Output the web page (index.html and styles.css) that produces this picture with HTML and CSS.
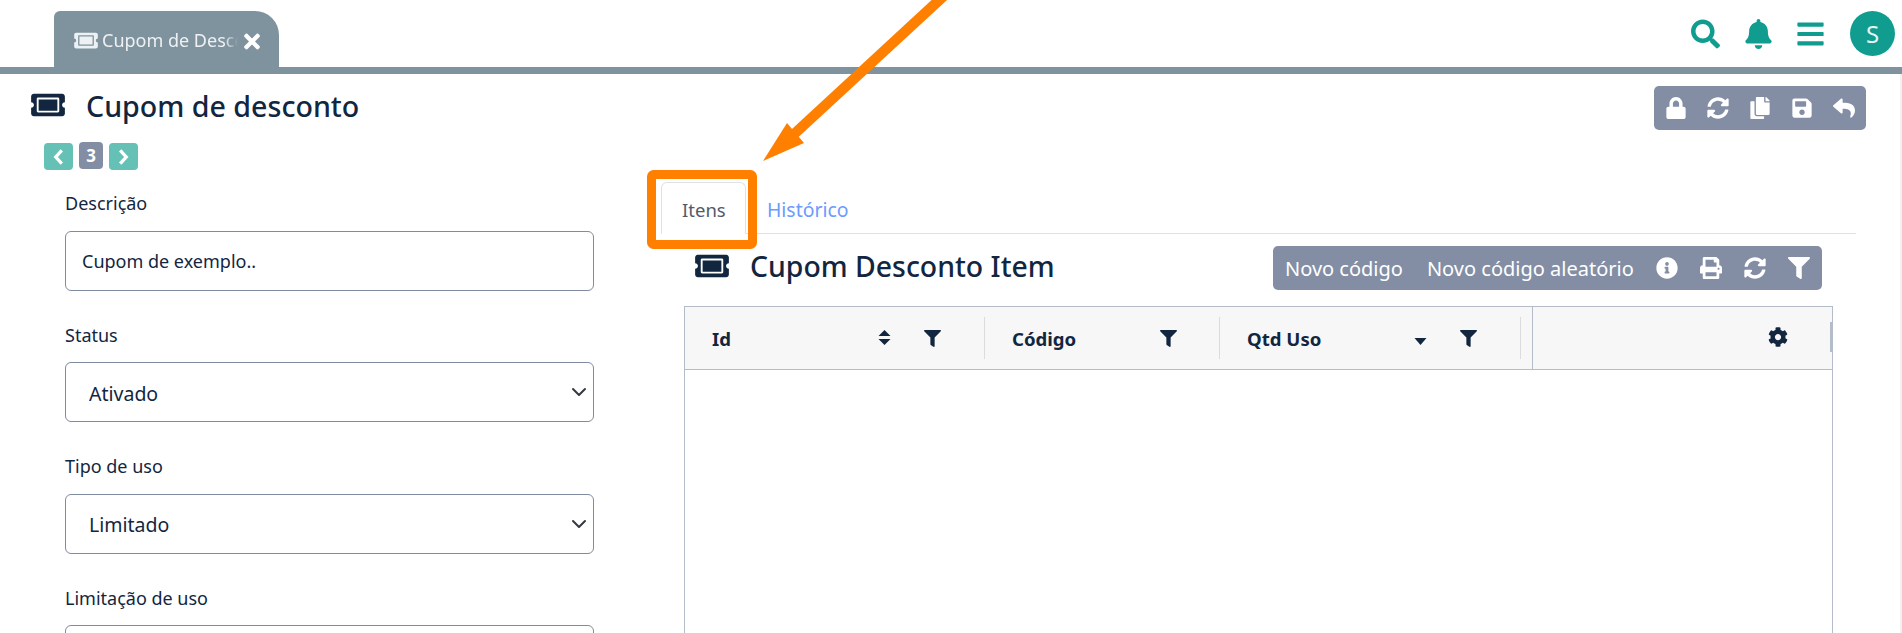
FILE: index.html
```html
<!DOCTYPE html>
<html lang="pt-BR">
<head>
    <meta charset="UTF-8">
    <title>Cupom de desconto</title>
    <link rel="stylesheet" href="styles.css">
</head>
<body>
<svg class="icon-defs" aria-hidden="true">
    <symbol id="i-ticket" viewBox="0 0 576 512"><path d="M128 160h320v192H128V160zm400 96c0 26.51 21.49 48 48 48v96c0 26.51-21.49 48-48 48H48c-26.51 0-48-21.49-48-48v-96c26.51 0 48-21.49 48-48s-21.49-48-48-48v-96c0-26.51 21.49-48 48-48h480c26.51 0 48 21.49 48 48v96c-26.51 0-48 21.49-48 48zm-48-104c0-13.255-10.745-24-24-24H120c-13.255 0-24 10.745-24 24v208c0 13.255 10.745 24 24 24h336c13.255 0 24-10.745 24-24V152z"/></symbol>
    <symbol id="i-sync" viewBox="0 0 512 512"><path d="M370.72 133.28C339.458 104.008 298.888 87.962 255.848 88c-77.458.068-144.328 53.178-162.791 126.85-1.344 5.363-6.122 9.15-11.651 9.15H24.103c-7.498 0-13.194-6.807-11.807-14.176C33.933 94.924 134.813 8 256 8c66.448 0 126.791 26.136 171.315 68.685L463.03 40.97C478.149 25.851 504 36.559 504 57.941V192c0 13.255-10.745 24-24 24H345.941c-21.382 0-32.09-25.851-16.971-40.971l41.75-41.749zM32 296h134.059c21.382 0 32.09 25.851 16.971 40.971l-41.75 41.75c31.262 29.273 71.835 45.319 114.876 45.28 77.418-.07 144.315-53.144 162.787-126.849 1.344-5.363 6.122-9.15 11.651-9.15h57.304c7.498 0 13.194 6.807 11.807 14.176C478.067 417.076 377.187 504 256 504c-66.448 0-126.791-26.136-171.315-68.685L48.97 471.03C33.851 486.149 8 475.441 8 454.059V320c0-13.255 10.745-24 24-24z"/></symbol>
    <symbol id="i-filter" viewBox="0 0 512 512"><path d="M487.976 0H24.028C2.71 0-8.047 25.866 7.058 40.971L192 225.941V432c0 7.831 3.821 15.17 10.237 19.662l80 55.98C298.02 518.69 320 507.493 320 487.98V225.941l184.947-184.97C520.021 25.896 509.338 0 487.976 0z"/></symbol>
</svg>

<header class="topbar">
    <div class="open-tab">
        <svg class="open-tab-icon"><use href="#i-ticket"/></svg>
        <span class="open-tab-text">Cupom de Desconto</span>
        <svg class="open-tab-close" viewBox="0 0 352 512"><path d="M242.72 256l100.07-100.07c12.28-12.28 12.28-32.19 0-44.48l-22.24-22.24c-12.28-12.28-32.19-12.28-44.48 0L176 189.28 75.93 89.21c-12.28-12.28-32.19-12.28-44.48 0L9.21 111.45c-12.28 12.28-12.28 32.19 0 44.48L109.28 256 9.21 356.07c-12.28 12.28-12.28 32.19 0 44.48l22.24 22.24c12.28 12.28 32.2 12.28 44.48 0L176 322.72l100.07 100.07c12.28 12.28 32.2 12.28 44.48 0l22.24-22.24c12.28-12.28 12.28-32.19 0-44.48L242.72 256z"/></svg>
    </div>
    <div class="top-actions">
        <svg class="top-icon" viewBox="0 0 512 512"><path d="M505 442.7L405.3 343c-4.5-4.5-10.6-7-17-7H372c27.6-35.3 44-79.7 44-128C416 93.1 322.9 0 208 0S0 93.1 0 208s93.1 208 208 208c48.3 0 92.7-16.4 128-44v16.3c0 6.4 2.5 12.5 7 17l99.7 99.7c9.4 9.4 24.6 9.4 33.9 0l28.3-28.3c9.4-9.4 9.4-24.6.1-34zM208 336c-70.7 0-128-57.2-128-128 0-70.7 57.2-128 128-128 70.7 0 128 57.2 128 128 0 70.7-57.2 128-128 128z"/></svg>
        <svg class="top-icon" viewBox="0 0 448 512"><path d="M224 512c35.32 0 63.97-28.65 63.97-64H160.03c0 35.35 28.65 64 63.97 64zm215.39-149.71c-19.32-20.76-55.47-51.99-55.47-154.29 0-77.7-54.48-139.9-127.94-155.16V32c0-17.67-14.32-32-31.98-32s-31.98 14.33-31.98 32v20.84C118.56 68.1 64.08 130.3 64.08 208c0 102.3-36.15 133.53-55.47 154.29-6 6.45-8.66 14.16-8.61 21.71.11 16.4 12.98 32 32.1 32h383.8c19.12 0 32-15.6 32.1-32 .05-7.55-2.61-15.27-8.61-21.71z"/></svg>
        <svg class="top-icon" viewBox="0 0 448 512"><path d="M16 132h416c8.837 0 16-7.163 16-16V76c0-8.837-7.163-16-16-16H16C7.163 60 0 67.163 0 76v40c0 8.837 7.163 16 16 16zm0 160h416c8.837 0 16-7.163 16-16v-40c0-8.837-7.163-16-16-16H16c-8.837 0-16 7.163-16 16v40c0 8.837 7.163 16 16 16zm0 160h416c8.837 0 16-7.163 16-16v-40c0-8.837-7.163-16-16-16H16c-8.837 0-16 7.163-16 16v40c0 8.837 7.163 16 16 16z"/></svg>
        <div class="avatar">S</div>
    </div>
</header>

<main class="page">
    <div class="page-head">
        <h1 class="page-title">
            <svg class="title-icon"><use href="#i-ticket"/></svg>
            Cupom de desconto
        </h1>
        <div class="toolbar toolbar-main">
            <svg class="tool-icon" viewBox="0 0 448 512"><path d="M400 224h-24v-72C376 68.2 307.8 0 224 0S72 68.2 72 152v72H48c-26.5 0-48 21.5-48 48v192c0 26.5 21.5 48 48 48h352c26.5 0 48-21.5 48-48V272c0-26.5-21.5-48-48-48zm-104 0H152v-72c0-39.7 32.3-72 72-72s72 32.3 72 72v72z"/></svg>
            <svg class="tool-icon"><use href="#i-sync"/></svg>
            <svg class="tool-icon" viewBox="0 0 448 512"><path d="M320 448v40c0 13.255-10.745 24-24 24H24c-13.255 0-24-10.745-24-24V120c0-13.255 10.745-24 24-24h72v296c0 30.879 25.121 56 56 56h168zm0-344V0H152c-13.255 0-24 10.745-24 24v368c0 13.255 10.745 24 24 24h272c13.255 0 24-10.745 24-24V128H344c-13.2 0-24-10.8-24-24zm120.971-31.029L375.029 7.029A24 24 0 0 0 358.059 0H352v96h96v-6.059a24 24 0 0 0-7.029-16.97z"/></svg>
            <svg class="tool-icon" viewBox="0 0 448 512"><path d="M433.941 129.941l-83.882-83.882A48 48 0 0 0 316.118 32H48C21.49 32 0 53.49 0 80v352c0 26.51 21.49 48 48 48h352c26.51 0 48-21.49 48-48V163.882a48 48 0 0 0-14.059-33.941zM224 416c-35.346 0-64-28.654-64-64 0-35.346 28.654-64 64-64s64 28.654 64 64c0 35.346-28.654 64-64 64zm96-304.52V212c0 6.627-5.373 12-12 12H76c-6.627 0-12-5.373-12-12V108c0-6.627 5.373-12 12-12h228.52c3.183 0 6.235 1.264 8.485 3.515l3.48 3.48A11.996 11.996 0 0 1 320 111.48z"/></svg>
            <svg class="tool-icon" viewBox="0 0 512 512"><path d="M8.309 189.836L184.313 37.851C199.719 24.546 224 35.347 224 56.015v80.053c160.629 1.839 288 34.032 288 186.258 0 61.441-39.581 122.309-83.333 154.132-13.653 9.931-33.111-2.533-28.077-18.631 45.344-145.012-21.507-183.51-176.59-185.742V360c0 20.7-24.3 31.453-39.687 18.164l-176.004-152c-11.071-9.562-11.086-26.753 0-36.328z"/></svg>
        </div>
    </div>

    <div class="columns">
        <section class="form-col">
            <div class="pager">
                <span class="pager-btn"><svg viewBox="0 0 10 16"><path d="M8 2L2.500 8 8 14"/></svg></span>
                <span class="pager-num">3</span>
                <span class="pager-btn"><svg viewBox="0 0 10 16"><path d="M2 2l5.500 6L2 14"/></svg></span>
            </div>
            <div class="field">
                <label>Descrição</label>
                <input class="control" type="text" value="Cupom de exemplo..">
            </div>
            <div class="field">
                <label>Status</label>
                <select class="control control-select"><option>Ativado</option></select>
            </div>
            <div class="field">
                <label>Tipo de uso</label>
                <select class="control control-select"><option>Limitado</option></select>
            </div>
            <div class="field">
                <label>Limitação de uso</label>
                <input class="control" type="text">
            </div>
        </section>

        <section class="detail-col">
            <nav class="tabs">
                <a class="tab tab-active">Itens</a>
                <a class="tab">Histórico</a>
            </nav>

            <div class="detail-head">
                <h2 class="detail-title">
                    <svg class="title-icon"><use href="#i-ticket"/></svg>
                    Cupom Desconto Item
                </h2>
                <div class="toolbar toolbar-grid">
                    <span class="tool-text">Novo código</span>
                    <span class="tool-text">Novo código aleatório</span>
                    <svg class="tool-icon" viewBox="0 0 512 512"><path d="M256 8C119.043 8 8 119.083 8 256c0 136.997 111.043 248 248 248s248-111.003 248-248C504 119.083 392.957 8 256 8zm0 110c23.196 0 42 18.804 42 42s-18.804 42-42 42-42-18.804-42-42 18.804-42 42-42zm56 254c0 6.627-5.373 12-12 12h-88c-6.627 0-12-5.373-12-12v-24c0-6.627 5.373-12 12-12h12v-64h-12c-6.627 0-12-5.373-12-12v-24c0-6.627 5.373-12 12-12h64c6.627 0 12 5.373 12 12v100h12c6.627 0 12 5.373 12 12v24z"/></svg>
                    <svg class="tool-icon" viewBox="0 0 512 512"><path d="M448 192V77.25c0-8.49-3.37-16.62-9.37-22.63L393.37 9.37c-6-6-14.14-9.37-22.63-9.37H96C78.33 0 64 14.33 64 32v160c-35.35 0-64 28.65-64 64v112c0 8.84 7.16 16 16 16h48v96c0 17.67 14.33 32 32 32h320c17.67 0 32-14.33 32-32v-96h48c8.84 0 16-7.16 16-16V256c0-35.35-28.65-64-64-64zm-64 256H128v-96h256v96zm0-224H128V64h192v48c0 8.84 7.16 16 16 16h48v96zm48 72c-13.25 0-24-10.75-24-24 0-13.26 10.75-24 24-24s24 10.74 24 24c0 13.25-10.75 24-24 24z"/></svg>
                    <svg class="tool-icon"><use href="#i-sync"/></svg>
                    <svg class="tool-icon"><use href="#i-filter"/></svg>
                </div>
            </div>

            <div class="grid">
                <div class="grid-head">
                    <div class="col col-id">
                        <span class="col-name">Id</span>
                        <svg class="sort-icon" viewBox="0 0 13 15"><path d="M6.500 0L12.500 6H.5zM.5 9h12l-6 6z"/></svg>
                        <svg class="col-filter"><use href="#i-filter"/></svg>
                    </div>
                    <div class="col col-code">
                        <span class="col-name">Código</span>
                        <svg class="col-filter"><use href="#i-filter"/></svg>
                    </div>
                    <div class="col col-qty">
                        <span class="col-name">Qtd Uso</span>
                        <svg class="sort-icon sort-down" viewBox="0 0 13 7"><path d="M.5 0h12l-6 7z"/></svg>
                        <svg class="col-filter"><use href="#i-filter"/></svg>
                    </div>
                    <div class="col-gap"></div>
                    <div class="col col-settings">
                        <svg class="col-gear" viewBox="0 0 512 512"><path d="M487.4 315.7l-42.6-24.6c4.3-23.2 4.3-47 0-70.2l42.6-24.6c4.9-2.8 7.1-8.6 5.5-14-11.1-35.6-30-67.8-54.7-94.6-3.8-4.1-10-5.1-14.8-2.3L380.8 110c-17.9-15.4-38.5-27.3-60.8-35.1V25.8c0-5.6-3.9-10.5-9.4-11.7-36.7-8.2-74.3-7.8-109.2 0-5.5 1.2-9.4 6.1-9.4 11.7V75c-22.2 7.9-42.8 19.8-60.8 35.1L88.7 85.5c-4.9-2.8-11-1.9-14.8 2.3-24.7 26.7-43.6 58.9-54.7 94.6-1.7 5.4.6 11.2 5.5 14L67.3 221c-4.3 23.2-4.3 47 0 70.2l-42.6 24.6c-4.9 2.8-7.1 8.6-5.5 14 11.1 35.6 30 67.8 54.7 94.6 3.8 4.1 10 5.1 14.8 2.3l42.6-24.6c17.9 15.4 38.5 27.3 60.8 35.1v49.2c0 5.6 3.9 10.500 9.4 11.7 36.7 8.2 74.3 7.8 109.2 0 5.5-1.2 9.4-6.1 9.4-11.7v-49.2c22.2-7.9 42.8-19.8 60.8-35.1l42.6 24.6c4.9 2.8 11 1.9 14.8-2.3 24.7-26.7 43.6-58.9 54.7-94.6 1.5-5.5-.7-11.3-5.6-14.1zM256 336c-44.1 0-80-35.9-80-80s35.9-80 80-80 80 35.9 80 80-35.9 80-80 80z"/></svg>
                    </div>
                </div>
                <div class="grid-body"></div>
            </div>
        </section>
    </div>
</main>

<!-- marcacao laranja por cima da tela -->
<svg class="callout" viewBox="0 0 1902 633">
    <rect x="651.5" y="174.500" width="101" height="70" rx="2" fill="none" stroke="#ff8000" stroke-width="9"/>
    <line x1="948" y1="-8" x2="792" y2="136" stroke="#ff8000" stroke-width="10.500"/>
    <polygon points="763,161 787,123 804,143" fill="#ff8000"/>
</svg>
</body>
</html>
```

FILE: styles.css
```css
html, body {
    height: 633px;
    overflow: hidden;
}

body {
    margin: 0;
    padding: 0;
    background-color: #ffffff;
    color: #12263f;
    font-family: "Noto Sans", "Open Sans", sans-serif;
    font-size: 18px;
}

.icon-defs {
    display: none;
}

/* barra de cima */
.topbar {
    display: flex;
    justify-content: space-between;
    align-items: flex-end;
    height: 67px;
    padding-left: 54px;
    padding-right: 7px;
    border-bottom: 7px solid #7f939f;
}

.open-tab {
    display: flex;
    align-items: center;
    width: 225px;
    height: 56px;
    padding-left: 20px;
    box-sizing: border-box;
    background-color: #7f939f;
    border-radius: 6px 24px 0 0;
    color: #eef1f3;
}

.open-tab-icon {
    width: 24px;
    height: 21px;
    margin-top: 2px;
    margin-right: 4px;
    fill: #eef1f3;
    flex: none;
}

.open-tab-text {
    width: 136px;
    flex: none;
    margin-top: 2px;
    overflow: hidden;
    white-space: nowrap;
    -webkit-mask-image: linear-gradient(to right, #000 90%, transparent);
    mask-image: linear-gradient(to right, #000 90%, transparent);
}

.open-tab-close {
    width: 16px;
    height: 23px;
    margin-left: 6px;
    margin-top: 4px;
    fill: #ffffff;
    flex: none;
}

.top-actions {
    display: flex;
    align-items: center;
    height: 67px;
}

.top-icon {
    width: 29px;
    height: 30px;
    margin-right: 23.5px;
    fill: #109d8f;
}

.avatar {
    width: 45px;
    height: 45px;
    margin-left: 1.5px;
    border-radius: 50%;
    background-color: #109d8f;
    color: #e6f4f2;
    font-size: 24px;
    line-height: 45px;
    text-align: center;
}

/* area com a barra de rolagem a direita */
.page {
    height: 559px;
    border-right: 2px solid #f1f1f1;
}

/* titulo */
.page-head {
    display: flex;
    justify-content: space-between;
    padding: 12px 34px 0 31px;
}

.page-title {
    display: flex;
    align-items: center;
    height: 38px;
    margin: 0;
    font-size: 28.6px;
    font-weight: 500;
}

.title-icon {
    width: 34px;
    height: 30px;
    margin-right: 21px;
    fill: #12263f;
    flex: none;
}

.toolbar {
    display: flex;
    align-items: center;
    height: 44px;
    box-sizing: border-box;
    background-color: #838ea5;
    border-radius: 5px;
    color: #ffffff;
}

.toolbar-main {
    width: 212px;
    padding-left: 11px;
    gap: 20px;
}

.toolbar-grid {
    width: 549px;
    padding-left: 12px;
    gap: 22px;
}

.tool-icon {
    width: 22px;
    height: 22px;
    fill: #ffffff;
    flex: none;
}

.tool-text {
    font-size: 20px;
    white-space: nowrap;
}

.tool-text + .tool-text {
    margin-left: 2px;
}

/* colunas */
.columns {
    display: flex;
}

.form-col {
    width: 529px;
    margin-left: 65px;
    padding-top: 12px;
    flex: none;
}

.pager {
    display: flex;
    align-items: flex-start;
    gap: 6px;
    height: 28px;
    margin-left: -21px;
    margin-bottom: 20px;
}

.pager-btn {
    display: flex;
    align-items: center;
    justify-content: center;
    width: 29px;
    height: 27px;
    margin-top: 1px;
    background-color: #65c0b6;
    border-radius: 4px;
}

.pager-btn svg {
    width: 11px;
    height: 18px;
    fill: none;
    stroke: #ffffff;
    stroke-width: 3;
}

.pager-num {
    width: 24px;
    height: 27px;
    background-color: #838ea5;
    border-radius: 4px;
    color: #ffffff;
    font-size: 17px;
    font-weight: 700;
    line-height: 27px;
    text-align: center;
}

.field {
    margin-bottom: 31px;
}

.field label {
    display: block;
    height: 27px;
    margin-bottom: 13.5px;
    line-height: 27px;
}

.control {
    display: block;
    width: 100%;
    height: 60px;
    box-sizing: border-box;
    padding: 0 16px;
    background-color: #ffffff;
    border: 1px solid #7f8ba0;
    border-radius: 6px;
    color: #12263f;
    font-family: inherit;
    font-size: 18px;
}

.control-select {
    padding-left: 23px;
    padding-top: 2px;
    font-size: 19.5px;
    appearance: none;
    -webkit-appearance: none;
    background-image: url("data:image/svg+xml,%3csvg xmlns='http://www.w3.org/2000/svg' viewBox='0 0 16 16'%3e%3cpath fill='none' stroke='%23343a40' stroke-linecap='round' stroke-linejoin='round' stroke-width='2' d='M2 5l6 6 6-6'/%3e%3c/svg%3e");
    background-repeat: no-repeat;
    background-position: right 6px center;
    background-size: 16px 16px;
}

.detail-col {
    width: 1195px;
    margin-left: 67px;
    padding-top: 52px;
    flex: none;
}

.tabs {
    display: flex;
    height: 52px;
    box-sizing: border-box;
    border-bottom: 1px solid #dee2e6;
}

.tab {
    height: 52px;
    box-sizing: border-box;
    padding: 0 20px;
    border: 1px solid transparent;
    border-radius: 6px 6px 0 0;
    color: #6c9bff;
    font-size: 19.4px;
    line-height: 54px;
}

.tab-active {
    width: 85px;
    border-color: #dee2e6 #dee2e6 #ffffff;
    background-color: #ffffff;
    color: #525a6c;
    font-size: 18.5px;
}

.detail-head {
    display: flex;
    justify-content: space-between;
    margin: 12px 34px 0;
}

.detail-title {
    display: flex;
    align-items: center;
    height: 40px;
    margin: 0;
    font-size: 28.4px;
    font-weight: 500;
}

.grid {
    margin: 16px 23px 0 23px;
    border: 1px solid #b5bcc9;
    border-width: 1px 1px 0;
}

.grid-head {
    display: grid;
    grid-template-columns: 300px 235px 301px 12px 1fr;
    height: 62px;
    background-color: #f7f7f7;
    border-bottom: 1px solid #b5bcc9;
}

.col {
    position: relative;
    display: flex;
    align-items: center;
    padding-left: 27px;
}

.col-id::after,
.col-code::after,
.col-qty::after {
    content: "";
    position: absolute;
    right: 0;
    top: 10px;
    bottom: 10px;
    width: 1px;
    background-color: #dcdcdc;
}

/* alca de redimensionar na ultima coluna */
.col-settings::after {
    content: "";
    position: absolute;
    right: 0;
    top: 15px;
    bottom: 17px;
    width: 2px;
    background-color: #b5bcc9;
}

.col-name {
    flex: 1;
    font-size: 18.6px;
    font-weight: 700;
    color: #12263f;
}

.sort-icon {
    width: 13px;
    height: 15px;
    margin-right: 33px;
    margin-top: -2px;
    fill: #12263f;
}

.sort-down {
    height: 7px;
    margin-top: 6px;
}

.col-filter {
    width: 17px;
    height: 17px;
    margin-right: 44px;
    fill: #12263f;
}

.col-code .col-filter {
    margin-right: 43px;
}

.col-gap {
    border-right: 1px solid #b5bcc9;
}

.col-settings {
    justify-content: flex-end;
    padding-right: 44px;
}

.col-gear {
    width: 20px;
    height: 20px;
    margin-top: -2px;
    fill: #12263f;
}

.grid-body {
    height: 400px;
}

/* marcacao por cima da tela */
.callout {
    position: absolute;
    left: 0;
    top: 0;
    width: 1902px;
    height: 633px;
    pointer-events: none;
}
```
